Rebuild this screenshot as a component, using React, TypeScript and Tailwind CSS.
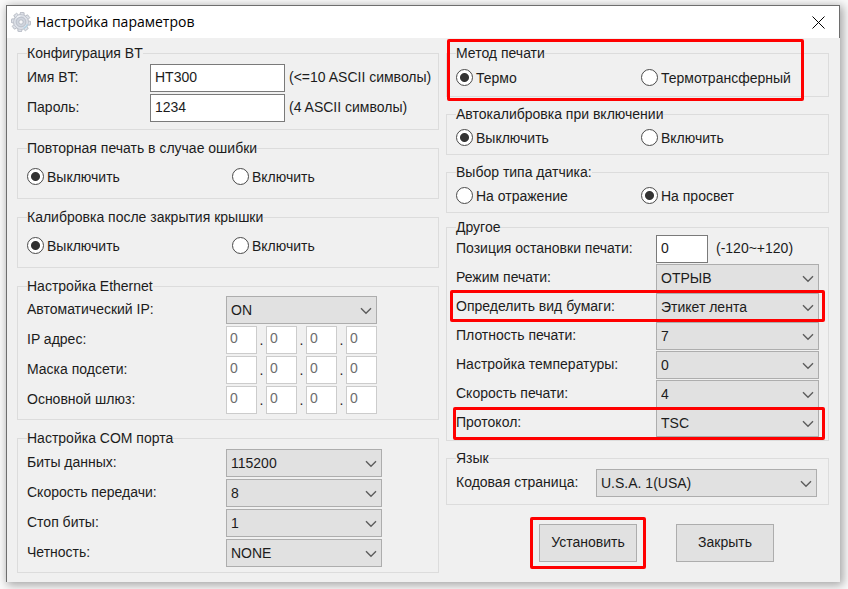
import { useId } from "react";
import type { ReactNode } from "react";
import clsx from "clsx";

const GEAR_TEETH = [0, 45, 90, 135, 180, 225, 270, 315];

function GearIcon() {
  return (
    <svg viewBox="0 0 20 20" className="w-5 h-5 shrink-0" aria-hidden="true">
      <g fill="#dde1e8" stroke="#a9aeb8" strokeWidth="0.7">
        {GEAR_TEETH.map((a) => (
          <path key={a} d="M7.6 4 8.2.4h3.6L12.4 4Z" transform={`rotate(${a + 8} 10 10)`} />
        ))}
        <circle cx="10" cy="10" r="7.2" />
      </g>
      <circle cx="10" cy="10" r="6.9" fill="#dde1e8" />
      <circle cx="10" cy="10" r="4.9" fill="#d0d5de" stroke="#b3b8c2" strokeWidth="0.8" />
      <circle cx="10" cy="10" r="2.2" fill="#f7f8fa" stroke="#adb2bc" strokeWidth="0.8" />
      <path d="M12.5 16.4a6.8 6.8 0 0 0 4-4.2" fill="none" stroke="#b4d2e4" strokeWidth="1.4" />
      <path d="M6 5.2a6 6 0 0 1 3.4-1.4" fill="none" stroke="#f2f4f7" strokeWidth="1.2" />
    </svg>
  );
}

function Group({ title, className, children }: { title: string; className?: string; children: ReactNode }) {
  return (
    <fieldset className={clsx("min-w-0 border border-[#dcdcdc] px-[9px]", className)}>
      <legend className="leading-[14px]">{title}</legend>
      {children}
    </fieldset>
  );
}

function Mark({ className }: { className: string }) {
  return <div className={clsx("absolute border-3 border-[#ff0000] rounded-[2px] pointer-events-none", className)} />;
}

function RadioPair({ options, selected, firstWidth }: { options: string[]; selected: number; firstWidth: string }) {
  const name = useId();
  return (
    <div className="flex">
      {options.map((option, i) => (
        <label key={option} className={clsx("flex items-center gap-[3px] h-[17px]", i === 0 && firstWidth)}>
          <input
            type="radio"
            name={name}
            defaultChecked={i === selected}
            className="appearance-none w-[17px] h-[17px] shrink-0 rounded-full border border-[#4a4a4a] bg-white checked:bg-[radial-gradient(circle,#333_4px,#fff_5px)]"
          />
          <span>{option}</span>
        </label>
      ))}
    </div>
  );
}

function Select({ id, value, className }: { id: string; value: string; className: string }) {
  return (
    <div className={clsx("relative h-7", className)}>
      <select
        id={id}
        defaultValue={value}
        className="appearance-none w-full h-full pl-1 pr-6 bg-[#e1e1e1] border border-[#adadad] text-[#1c1c1c]"
      >
        <option>{value}</option>
      </select>
      <svg
        viewBox="0 0 12 8"
        className="absolute right-[5px] top-[11px] w-3 h-2 pointer-events-none"
        fill="none"
        stroke="#5c5c5c"
        strokeWidth="1.4"
      >
        <path d="M1 1.2 6 6.2l5-5" />
      </svg>
    </div>
  );
}

function SelectRow({
  label,
  value,
  labelWidth,
  selectWidth,
  rowHeight,
  children,
}: {
  label: string;
  value: string;
  labelWidth: string;
  selectWidth: string;
  rowHeight: string;
  children?: ReactNode;
}) {
  const id = useId();
  return (
    <div className={clsx("relative flex items-center", rowHeight)}>
      <label htmlFor={id} className={clsx("pb-[2px]", labelWidth)}>
        {label}
      </label>
      <Select id={id} value={value} className={selectWidth} />
      {children}
    </div>
  );
}

function TextRow({ label, value, hint }: { label: string; value: string; hint: string }) {
  const id = useId();
  return (
    <div className="flex items-center h-[30px]">
      <label htmlFor={id} className="w-[123px] shrink-0 pb-[2px]">
        {label}
      </label>
      <input
        id={id}
        defaultValue={value}
        className="w-[135px] h-7 shrink-0 px-1 pb-[2px] bg-white border border-[#7a7a7a]"
      />
      <span className="ml-1 pb-[2px] whitespace-nowrap">{hint}</span>
    </div>
  );
}

function IpRow({ label }: { label: string }) {
  return (
    <div role="group" aria-label={label} className="flex items-center h-[30px]">
      <span className="w-[199px] pb-[2px]">{label}</span>
      {[0, 1, 2, 3].map((i) => (
        <div key={i} className="flex items-center">
          {i > 0 && <span className="w-[9px] text-center">.</span>}
          <input
            aria-label={`${label} ${i + 1}`}
            defaultValue="0"
            disabled
            className="w-[31px] h-7 px-[3px] pb-1 bg-white border border-[#cccccc] text-[#6d6d6d]"
          />
        </div>
      ))}
    </div>
  );
}

const comPort = [
  { label: "Биты данных:", value: "115200" },
  { label: "Скорость передачи:", value: "8" },
  { label: "Стоп биты:", value: "1" },
  { label: "Четность:", value: "NONE" },
];

const other = [
  { label: "Режим печати:", value: "ОТРЫВ" },
  { label: "Определить вид бумаги:", value: "Этикет лента", mark: "-left-[6px] -right-[6px] -top-[2px] -bottom-[1px]" },
  { label: "Плотность печати:", value: "7" },
  { label: "Настройка температуры:", value: "0" },
  { label: "Скорость печати:", value: "4" },
  { label: "Протокол:", value: "TSC", mark: "-left-[3px] -right-[6px] -top-[1px] -bottom-[3px]" },
];

export default function App() {
  return (
    <div className="min-h-screen bg-[#fafafa] pt-[5px] pl-[6px] pr-2 pb-[7px]">
      <main className="bg-[#f0f0f0] border-t border-l border-[#6e6e6e] shadow-[2px_2px_9px_1px_rgba(0,0,0,0.35)] font-['Liberation_Sans',Arial,sans-serif] text-[14px] leading-4 text-[#1c1c1c]">
        <header className="flex items-center h-8 bg-white border-r border-[#6e6e6e] pl-1 pr-[14px]">
          <GearIcon />
          <h1 className="ml-[5px] font-['Open_Sans','Noto_Sans',sans-serif] text-[14px] text-black">
            Настройка параметров
          </h1>
          <button aria-label="Закрыть окно" className="ml-auto">
            <svg viewBox="0 0 13 13" className="w-[13px] h-[13px]" stroke="#000" strokeWidth="1">
              <path d="M.5.5l12 12M12.5.5l-12 12" />
            </svg>
          </button>
        </header>

        <div className="grid grid-cols-[minmax(0,422fr)_minmax(0,383fr)] gap-[7px] pt-2 pb-[9px] pl-[10px] pr-[11px]">
          <div className="flex flex-col gap-[11px]">
            <Group title="Конфигурация BT" className="pb-[6px]">
              <div className="pt-[3px]">
                <TextRow label="Имя BT:" value="HT300" hint="(<=10 ASCII символы)" />
                <TextRow label="Пароль:" value="1234" hint="(4 ASCII символы)" />
              </div>
            </Group>
            <Group title="Повторная печать в случае ошибки" className="pb-[13px]">
              <div className="pt-[13px]">
                <RadioPair options={["Выключить", "Включить"]} selected={0} firstWidth="w-[205px]" />
              </div>
            </Group>
            <Group title="Калибровка после закрытия крышки" className="pb-[13px]">
              <div className="pt-[13px]">
                <RadioPair options={["Выключить", "Включить"]} selected={0} firstWidth="w-[205px]" />
              </div>
            </Group>
            <Group title="Настройка Ethernet" className="pb-1">
              <div className="pt-[2px]">
                <SelectRow
                  label="Автоматический IP:"
                  value="ON"
                  labelWidth="w-[199px]"
                  selectWidth="w-[151px]"
                  rowHeight="h-[30px]"
                />
                <IpRow label="IP адрес:" />
                <IpRow label="Маска подсети:" />
                <IpRow label="Основной шлюз:" />
              </div>
            </Group>
            <Group title="Настройка COM порта" className="pb-1">
              <div className="pt-[3px]">
                {comPort.map((row) => (
                  <SelectRow
                    key={row.label}
                    label={row.label}
                    value={row.value}
                    labelWidth="w-[199px]"
                    selectWidth="w-[156px]"
                    rowHeight="h-[30px]"
                  />
                ))}
              </div>
            </Group>
          </div>

          <div className="flex flex-col gap-[10px]">
            <div className="relative">
              <Group title="Метод печати" className="pb-[10px]">
                <div className="pt-[9px]">
                  <RadioPair options={["Термо", "Термотрансферный"]} selected={0} firstWidth="w-[185px]" />
                </div>
              </Group>
              <Mark className="left-px right-[25px] -top-[7px] -bottom-1" />
            </div>
            <Group title="Автокалибровка при включении" className="pb-2">
              <div className="pt-2">
                <RadioPair options={["Выключить", "Включить"]} selected={0} firstWidth="w-[185px]" />
              </div>
            </Group>
            <Group title="Выбор типа датчика:" className="pb-2">
              <div className="pt-2">
                <RadioPair options={["На отражение", "На просвет"]} selected={1} firstWidth="w-[185px]" />
              </div>
            </Group>
            <Group title="Другое" className="-mt-[3px] pb-[3px]">
              <div className="flex items-center h-[29px]">
                <label htmlFor="stop-position" className="flex-1 pb-[2px]">
                  Позиция остановки печати:
                </label>
                <div className="flex items-center w-[163px]">
                  <input
                    id="stop-position"
                    defaultValue="0"
                    className="w-[52px] h-7 px-1 pb-[2px] bg-white border border-[#7a7a7a]"
                  />
                  <span className="ml-2 pb-[2px]">(-120~+120)</span>
                </div>
              </div>
              {other.map((row) => (
                <SelectRow
                  key={row.label}
                  label={row.label}
                  value={row.value}
                  labelWidth="flex-1"
                  selectWidth="w-[163px]"
                  rowHeight="h-[29px]"
                >
                  {row.mark && <Mark className={row.mark} />}
                </SelectRow>
              ))}
            </Group>
            <Group title="Язык" className="pb-[7px]">
              <div className="pt-1">
                <SelectRow
                  label="Кодовая страница:"
                  value="U.S.A. 1(USA)"
                  labelWidth="flex-1"
                  selectWidth="w-[221px] mr-[2px]"
                  rowHeight="h-7"
                />
              </div>
            </Group>
            <div className="flex gap-[39px] pt-[9px] pl-[93px]">
              <div className="relative">
                <button className="w-[98px] h-[38px] pb-[2px] bg-[#e1e1e1] border border-[#adadad]">Установить</button>
                <Mark className="-inset-x-[9px] -inset-y-[7px]" />
              </div>
              <button className="w-[98px] h-[38px] pb-[2px] bg-[#e1e1e1] border border-[#adadad]">Закрыть</button>
            </div>
          </div>
        </div>
      </main>
    </div>
  );
}
